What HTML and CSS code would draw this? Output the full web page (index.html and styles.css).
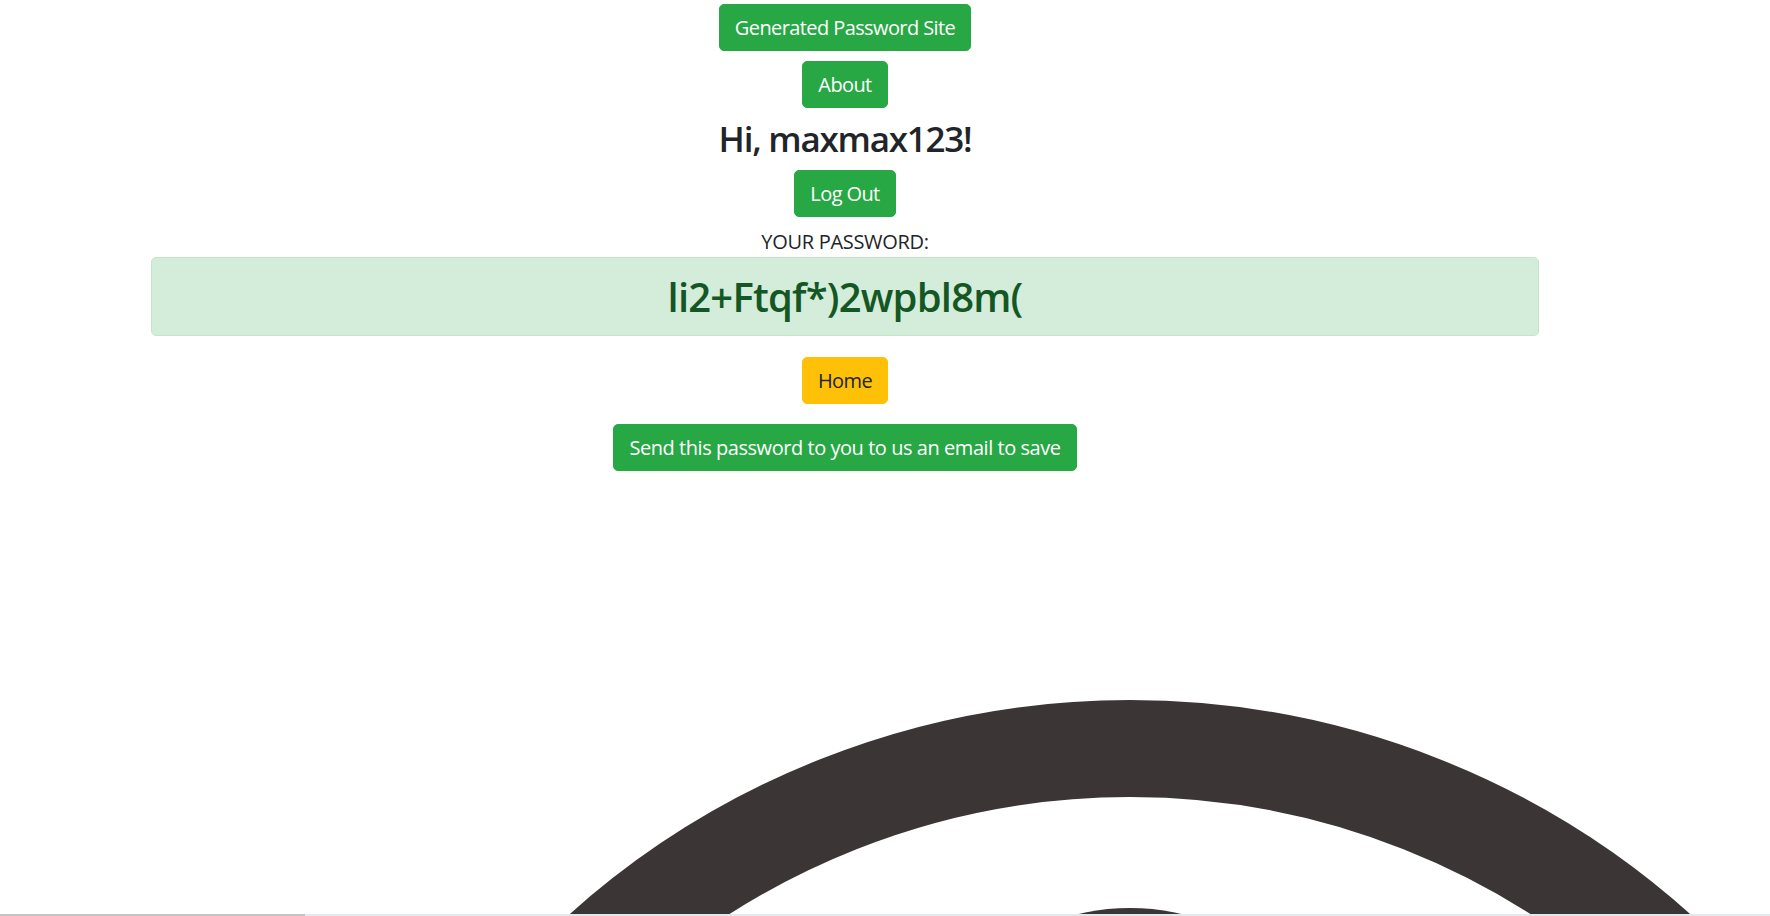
FILE: index.html
```html
<!DOCTYPE html>
<html lang="en">
<head>
<meta charset="utf-8">
<title>Generated Password Site</title>
<link rel="stylesheet" href="styles.css">
</head>
<body>
<main class="page">
  <a class="btn btn-green" href="#">Generated Password Site</a>
  <a class="btn btn-green" href="#">About</a>
  <h3 class="greeting">Hi, maxmax123!</h3>
  <a class="btn btn-green" href="#">Log Out</a>
  <p class="label">YOUR PASSWORD:</p>
  <div class="alert">
    <h2 class="password">li2+Ftqf*)2wpbl8m(</h2>
  </div>
  <a class="btn btn-yellow" href="#">Home</a>
  <a class="btn btn-green btn-send" href="#">Send this password to you to us an email to save</a>
  <svg class="logo" width="1770" height="425" viewBox="0 0 1770 425" aria-hidden="true">
    <circle cx="1130" cy="1049" r="791.5" fill="none" stroke="#3b3536" stroke-width="97"/>
    <circle cx="1130" cy="646" r="229" fill="#3b3536"/>
  </svg>
</main>
<div class="scrollbar"><span class="thumb"></span></div>
</body>
</html>
```
FILE: styles.css
```css
html, body {
  margin: 0;
  padding: 0;
  overflow: hidden;
  background: #fff;
}
body {
  font-family: "Open Sans", "Noto Sans", sans-serif;
  font-size: 20px;
  line-height: 1.5;
  color: #212529;
  width: 1770px;
  height: 916px;
}
.page {
  width: 1690px;
  display: flex;
  flex-direction: column;
  align-items: center;
  padding-top: 4px;
}
.btn {
  display: inline-block;
  box-sizing: border-box;
  height: 47px;
  padding: 8px 15px 7px;
  border: 1px solid transparent;
  border-radius: 5px;
  font-size: 20px;
  line-height: 30px;
  letter-spacing: -0.6px;
  text-decoration: none;
  white-space: nowrap;
  margin-bottom: 10px;
}
.btn-green {
  background: #28a745;
  border-color: #28a745;
  color: #fff;
}
.btn-yellow {
  background: #ffc107;
  border-color: #ffc107;
  color: #212529;
  margin-bottom: 20px;
}
.greeting {
  margin: 0 0 10px;
  font-size: 35px;
  line-height: 42px;
  font-weight: 550;
  letter-spacing: -1.25px;
  color: #212529;
}
.label {
  margin: 0;
  line-height: 30px;
  font-size: 20px;
  letter-spacing: -0.3px;
}
.alert {
  box-sizing: border-box;
  align-self: stretch;
  margin: 0 151px 21px;
  padding: 15px 25px;
  background: #d4edda;
  border: 1px solid #c3e6cb;
  border-radius: 5px;
  text-align: center;
}
.alert .password {
  margin: 0;
  font-size: 40px;
  line-height: 47px;
  font-weight: 600;
  letter-spacing: -0.8px;
  color: #155724;
}
.btn-send {
  letter-spacing: -0.45px;
  margin-bottom: 20px;
}
.logo {
  display: block;
  align-self: flex-start;
  flex: none;
}
.scrollbar {
  position: fixed;
  left: 0;
  right: 0;
  bottom: 0;
  height: 2px;
  background: #e3e8ec;
}
.scrollbar .thumb {
  display: block;
  width: 305px;
  height: 2px;
  background: #c4c4c4;
}
```
